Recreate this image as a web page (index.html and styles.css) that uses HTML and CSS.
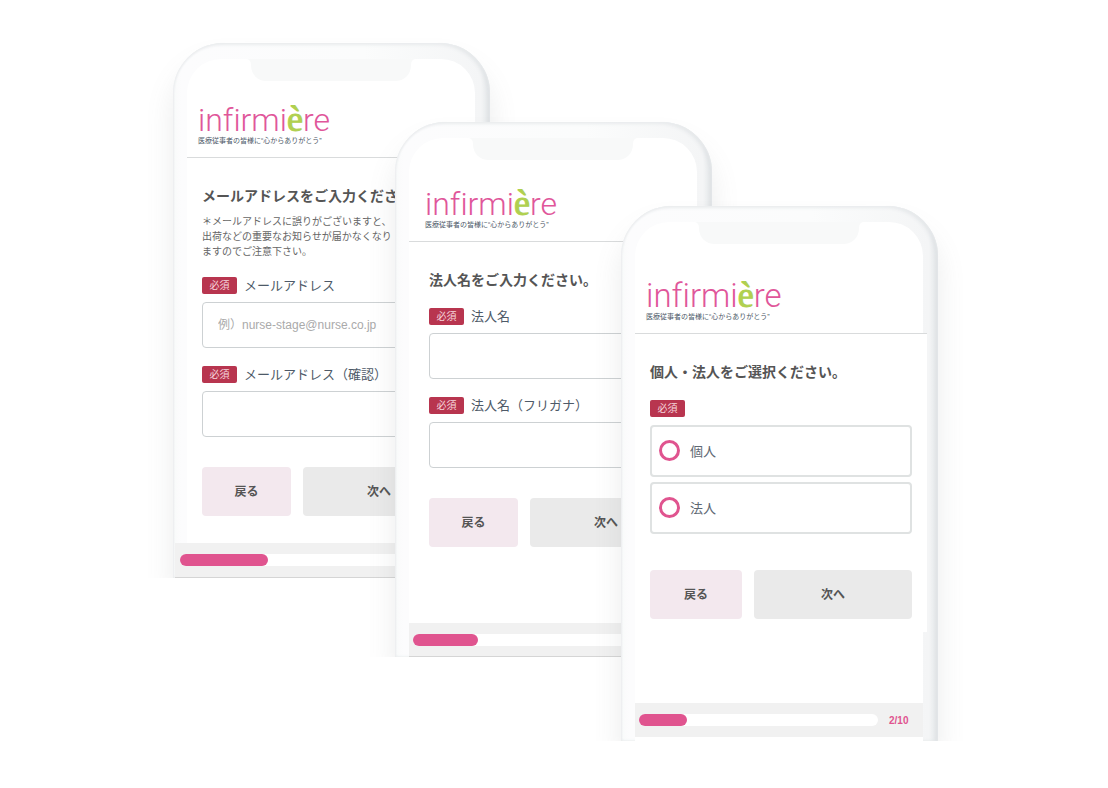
FILE: index.html
```
<!DOCTYPE html>
<html lang="ja">
<head>
    <meta charset="UTF-8">
    <meta name="viewport" content="width=device-width, initial-scale=1">
    <title>infirmière</title>
    <link rel="stylesheet" href="styles.css">
</head>
<body>
    <main class="stage">
        <!-- メールアドレス -->
        <section class="phone phone-mail">
            <div class="screen">
                <div class="status">
                    <svg class="notch" viewBox="0 0 168 23"><path d="M0 0H168Q164 1 164 6C164 16 157 22 148 22H20C11 22 4 16 4 6Q4 1 0 0Z"/></svg>
                </div>
                <header class="header">
                    <p class="logo">infirmi<span class="logo-e">è</span>re</p>
                    <p class="tagline">医療従事者の皆様に“心からありがとう”</p>
                </header>
                <form class="content">
                    <h2 class="title">メールアドレスをご入力ください。</h2>
                    <p class="note">＊メールアドレスに誤りがございますと、<br>出荷などの重要なお知らせが届かなくなり<br>ますのでご注意下さい。</p>
                    <div class="field">
                        <div class="field-head">
                            <span class="badge">必須</span>
                            <label for="mail">メールアドレス</label>
                        </div>
                        <input class="text-box" type="email" id="mail" placeholder="例）nurse-stage@nurse.co.jp">
                    </div>
                    <div class="field">
                        <div class="field-head">
                            <span class="badge">必須</span>
                            <label for="mail2">メールアドレス（確認）</label>
                        </div>
                        <input class="text-box" type="email" id="mail2">
                    </div>
                    <div class="buttons">
                        <button class="btn btn-back" type="button">戻る</button>
                        <button class="btn btn-next" type="button">次へ</button>
                    </div>
                </form>
                <footer class="steps">
                    <div class="track"><div class="bar" style="width: 37%"></div></div>
                </footer>
            </div>
        </section>

        <!-- 法人名 -->
        <section class="phone phone-company">
            <div class="screen">
                <div class="status">
                    <svg class="notch" viewBox="0 0 168 23"><path d="M0 0H168Q164 1 164 6C164 16 157 22 148 22H20C11 22 4 16 4 6Q4 1 0 0Z"/></svg>
                </div>
                <header class="header">
                    <p class="logo">infirmi<span class="logo-e">è</span>re</p>
                    <p class="tagline">医療従事者の皆様に“心からありがとう”</p>
                </header>
                <form class="content">
                    <h2 class="title">法人名をご入力ください。</h2>
                    <div class="field">
                        <div class="field-head">
                            <span class="badge">必須</span>
                            <label for="company">法人名</label>
                        </div>
                        <input class="text-box" type="text" id="company">
                    </div>
                    <div class="field">
                        <div class="field-head">
                            <span class="badge">必須</span>
                            <label for="kana">法人名（フリガナ）</label>
                        </div>
                        <input class="text-box" type="text" id="kana">
                    </div>
                    <div class="buttons">
                        <button class="btn btn-back" type="button">戻る</button>
                        <button class="btn btn-next" type="button">次へ</button>
                    </div>
                </form>
                <footer class="steps">
                    <div class="track"><div class="bar" style="width: 27%"></div></div>
                </footer>
            </div>
        </section>

        <!-- 個人・法人 -->
        <section class="phone phone-type">
            <div class="screen">
                <div class="status">
                    <svg class="notch" viewBox="0 0 168 23"><path d="M0 0H168Q164 1 164 6C164 16 157 22 148 22H20C11 22 4 16 4 6Q4 1 0 0Z"/></svg>
                </div>
                <header class="header">
                    <p class="logo">infirmi<span class="logo-e">è</span>re</p>
                    <p class="tagline">医療従事者の皆様に“心からありがとう”</p>
                </header>
                <form class="content">
                    <h2 class="title">個人・法人をご選択ください。</h2>
                    <div class="field">
                        <div class="field-head">
                            <span class="badge">必須</span>
                        </div>
                        <div class="options">
                            <label class="option"><input type="radio" name="type">個人</label>
                            <label class="option"><input type="radio" name="type">法人</label>
                        </div>
                    </div>
                    <div class="buttons">
                        <button class="btn btn-back" type="button">戻る</button>
                        <button class="btn btn-next" type="button">次へ</button>
                    </div>
                </form>
                <footer class="steps">
                    <div class="track"><div class="bar" style="width: 20%"></div></div>
                    <span class="count">2/10</span>
                </footer>
            </div>
        </section>
    </main>
</body>
</html>
```

FILE: styles.css
```
* {
    box-sizing: border-box;
}

body {
    margin: 0;
    background-color: #fff;
    color: #555;
    font-family: "Liberation Sans", "Noto Sans CJK JP", sans-serif;
}

h2,
p {
    margin: 0;
}

.stage {
    position: relative;
    max-width: 762px;
    min-height: 788px;
    margin: 0 auto;
}

/* phones */
.phone {
    position: absolute;
    width: 317px;
    height: 535px;
    padding: 16px 15px 0 14px;
    display: flex;
    border-radius: 50px 50px 0 0;
    background: linear-gradient(90deg, #f9fafa 0, #fcfcfd 8px, #fbfcfc 60%, #f4f5f6 97%, #e6e9eb 100%);
    box-shadow: 0 20px 28px rgba(110, 118, 122, 0.14),
        inset 0 1px 3px #edeff0,
        inset -3px 1px 5px -1px #d9dde0,
        inset 1px 0 2px #eceef0;
    clip-path: inset(-40px -40px 0 -40px);
}

.phone-mail {
    left: 0;
    top: 43px;
}

.phone-company {
    left: 222px;
    top: 122px;
}

.phone-type {
    left: 448px;
    top: 206px;
}

.screen {
    flex: 1;
    min-width: 0;
    display: flex;
    flex-direction: column;
    background-color: #fff;
    border-radius: 34px 34px 0 0;
}

.status {
    height: 23px;
}

.notch {
    display: block;
    width: 168px;
    height: 23px;
    margin: 0 auto;
    fill: #f8f9f9;
}

/* logo */
.header {
    height: 76px;
    padding: 0 0 11px 11px;
    display: flex;
    flex-direction: column;
    justify-content: flex-end;
    border-bottom: 1px solid #d9dbdc;
}

.logo {
    font-family: Roboto, sans-serif;
    font-size: 32px;
    font-weight: 300;
    line-height: 32px;
    font-variant-ligatures: none;
    color: #e0569a;
    white-space: nowrap;
}

.logo-e {
    font-family: "Liberation Serif", serif;
    font-size: 36px;
    font-weight: normal;
    line-height: 0;
    color: #b0d050;
    -webkit-text-stroke: 1px #b0d050;
}

.tagline {
    font-size: 7px;
    line-height: 10px;
    color: #4a5766;
    white-space: nowrap;
}

.phone-company .header {
    height: 81px;
    padding-left: 16px;
}

.phone-type .header {
    height: 89px;
    margin-right: -4px;
}

.phone-type .logo {
    font-size: 33px;
}

/* form */
.content {
    padding: 28px 20px 0 15px;
}

.phone-company .content {
    padding-left: 20px;
    padding-right: 15px;
}

.phone-type .content {
    flex: 1;
    margin-right: -4px;
    margin-bottom: 71px;
    padding-right: 15px;
    background-color: #fff;
}

.title {
    font-size: 14px;
    line-height: 20px;
    font-weight: bold;
    white-space: nowrap;
}

.note {
    margin-top: 8px;
    font-size: 10px;
    line-height: 15px;
    color: #666;
    white-space: nowrap;
}

.field {
    margin-top: 18px;
}

.field-head {
    height: 17px;
    display: flex;
    align-items: center;
    gap: 7px;
    font-size: 13px;
    line-height: 17px;
    color: #4e5a68;
}

.badge {
    width: 35px;
    border-radius: 2px;
    background-color: #b8354f;
    color: #f5d5dc;
    font-size: 10px;
    text-align: center;
}

.text-box {
    display: block;
    width: 100%;
    height: 46px;
    margin-top: 8px;
    padding: 0 15px;
    border: 1px solid #cdd1d3;
    border-radius: 4px;
    background-color: transparent;
    font-family: inherit;
    font-size: 12px;
}

.text-box::placeholder {
    color: #aaa;
}

.options {
    margin-top: 8px;
    display: flex;
    flex-direction: column;
    gap: 5px;
}

.option {
    height: 52px;
    padding: 0 7px 2px;
    display: flex;
    align-items: center;
    gap: 10px;
    border: 2px solid #dfe2e2;
    border-radius: 4px;
    font-size: 13px;
    color: #5e6873;
}

.option input {
    appearance: none;
    width: 21px;
    height: 21px;
    margin: 0;
    border: 3px solid #e0548f;
    border-radius: 50%;
}

.option input:checked {
    background: radial-gradient(circle, #e0548f 40%, transparent 45%);
}

.buttons {
    display: flex;
    gap: 12px;
    margin-top: 30px;
}

.phone-type .buttons {
    margin-top: 36px;
}

.btn {
    height: 49px;
    padding: 0 0 2px;
    border: none;
    border-radius: 4px;
    color: #555;
    font-family: inherit;
    font-size: 12px;
    font-weight: bold;
    cursor: pointer;
}

.btn-back {
    flex: 7 1 0;
    background-color: #f3e8ee;
}

.btn-next {
    flex: 12 1 0;
    background-color: #eaeaea;
}

/* progress */
.steps {
    height: 34px;
    margin-top: auto;
    padding: 0 11px 0 4px;
    display: flex;
    align-items: center;
    gap: 11px;
    background-color: #f1f1f1;
}

.phone-mail .steps,
.phone-company .steps {
    border-bottom: 1px solid #d5d5d5;
}

.phone-mail .steps {
    height: 35px;
    margin-left: -12px;
    padding-left: 5px;
}

.phone-type .steps {
    margin-top: 0;
    margin-bottom: 4px;
}

.track {
    flex: 1;
    max-width: 239px;
    height: 12px;
    border-radius: 6px;
    background-color: #fff;
}

.bar {
    height: 12px;
    border-radius: 6px;
    background-color: #e0548f;
}

.count {
    font-size: 10px;
    font-weight: bold;
    color: #e0548f;
}
```
